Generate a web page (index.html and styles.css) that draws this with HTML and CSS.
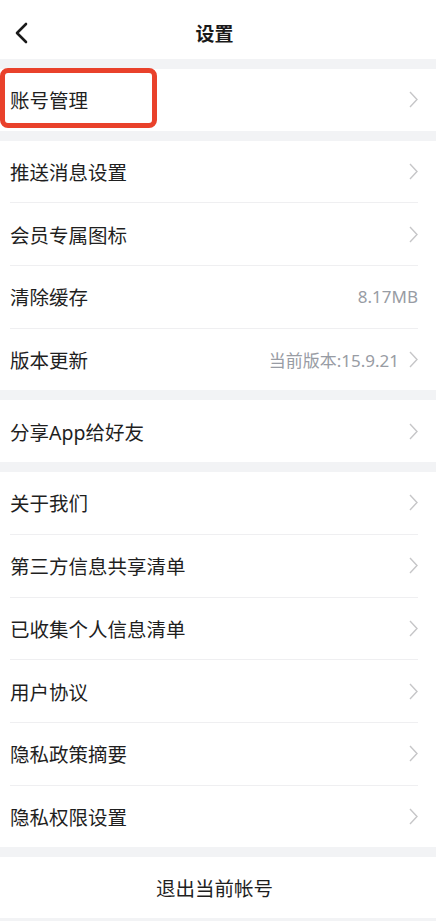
FILE: index.html
```html
<!DOCTYPE html>
<html>
<head>
    <meta charset="utf-8">
    <title>设置</title>
    <link rel="stylesheet" href="styles.css">
</head>
<body>
    <div class="page">
        <div class="navbar">
            <svg class="back" width="14" height="22" viewBox="0 0 14 22">
                <polyline points="11,2 2,11 11,20" fill="none" stroke="#1a1a1a" stroke-width="2.6" stroke-linecap="round" stroke-linejoin="round"/>
            </svg>
            <div class="title">设置</div>
            <div></div>
        </div>

        <div class="group">
            <div class="row">
                <span class="mark"></span>
                <span class="label">账号管理</span>
                <span class="arrow"></span>
            </div>
        </div>

        <div class="group">
            <div class="row"><span class="label">推送消息设置</span><span class="arrow"></span></div>
            <div class="row"><span class="label">会员专属图标</span><span class="arrow"></span></div>
            <div class="row"><span class="label">清除缓存</span><span class="value">8.17MB</span></div>
            <div class="row"><span class="label">版本更新</span><span class="value with-arrow">当前版本:15.9.21</span><span class="arrow"></span></div>
        </div>

        <div class="group">
            <div class="row"><span class="label">分享App给好友</span><span class="arrow"></span></div>
        </div>

        <div class="group">
            <div class="row"><span class="label">关于我们</span><span class="arrow"></span></div>
            <div class="row"><span class="label">第三方信息共享清单</span><span class="arrow"></span></div>
            <div class="row"><span class="label">已收集个人信息清单</span><span class="arrow"></span></div>
            <div class="row"><span class="label">用户协议</span><span class="arrow"></span></div>
            <div class="row"><span class="label">隐私政策摘要</span><span class="arrow"></span></div>
            <div class="row"><span class="label">隐私权限设置</span><span class="arrow"></span></div>
        </div>

        <div class="group">
            <div class="logout">退出当前帐号</div>
        </div>
    </div>
</body>
</html>
```

FILE: styles.css
```css
body { margin: 0; background: #fff; font-family: "Noto Sans", "Noto Sans CJK SC", sans-serif; color: #1f1f1f; }
.page { width: 436px; min-height: 100vh; background: #f2f3f5; }

.navbar { height: 59px; box-sizing: border-box; padding: 7px 7px 0 0; background: #fff; display: grid; grid-template-columns: 1fr auto 1fr; align-items: center; }
.back { margin-left: 15px; }
.title { font-size: 19px; font-weight: bold; color: #1a1a1a; }

.group { background: #fff; margin-top: 10px; padding: 0 18px 0 10px; }
.row { height: 61.7px; display: flex; align-items: center; position: relative; }
.row + .row { border-top: 1px solid #efeff1; }
.label { flex: 1; font-size: 19.5px; }
.value { font-size: 17px; color: #989ca4; }
.value.with-arrow { margin-right: 10px; }

.arrow { width: 9px; height: 17px; background: url("data:image/svg+xml;utf8,<svg xmlns='http://www.w3.org/2000/svg' width='9' height='17' viewBox='0 0 9 17'><polyline points='1,1 8,8.5 1,16' fill='none' stroke='%23c6c6c8' stroke-width='1.4'/></svg>") no-repeat center; }

.mark { position: absolute; left: -10px; top: -1px; width: 157px; height: 60px; box-sizing: border-box; border: 5px solid #e9412b; border-radius: 8px; }

.logout { height: 61px; display: flex; align-items: center; justify-content: center; font-size: 19.5px; margin-right: -8px; padding-right: 7px; }
```
